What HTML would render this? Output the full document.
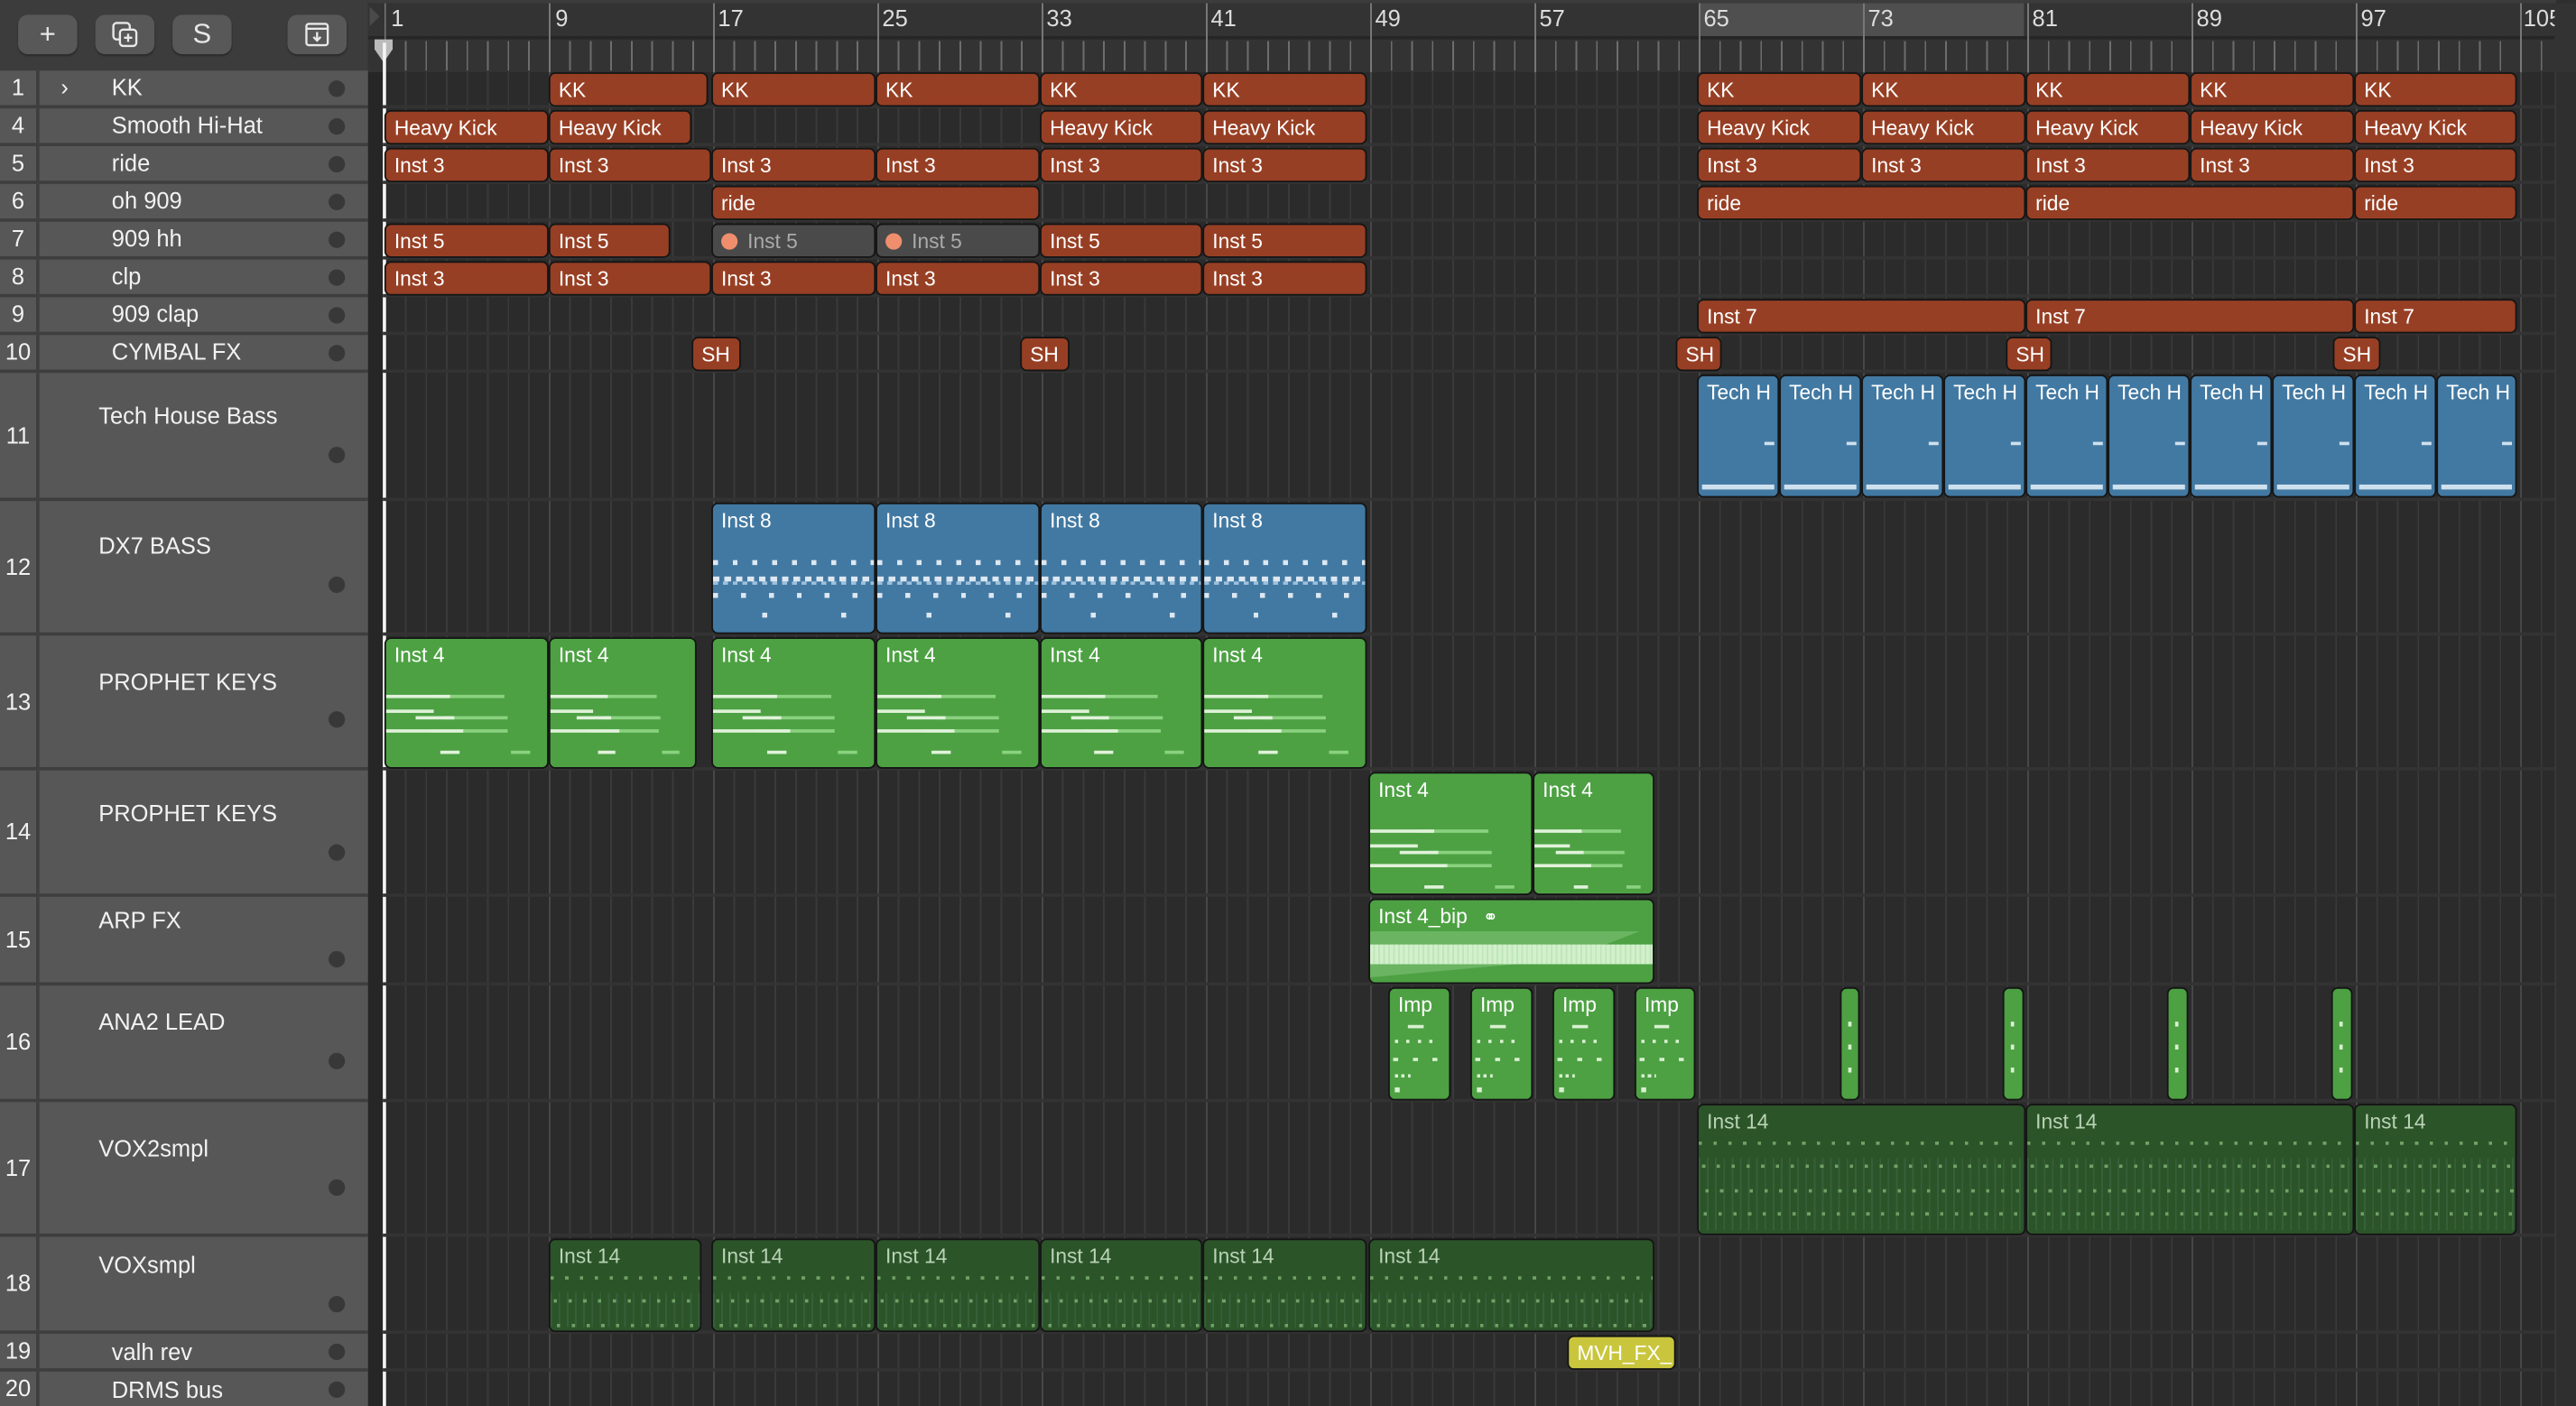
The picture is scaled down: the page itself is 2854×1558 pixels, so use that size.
<!DOCTYPE html>
<html><head><meta charset="utf-8">
<style>
html,body{margin:0;padding:0;background:#2b2b2b;width:2854px;height:1558px;overflow:hidden}
#c{position:absolute;left:0;top:0;width:1568px;height:856px;transform:scale(1.82015);transform-origin:0 0;font-family:"Liberation Sans",sans-serif;background:#2b2b2b;overflow:hidden}
.a{position:absolute}
.hdr{left:0;top:0;width:224px;height:44px;background:#3c3c3c;border-bottom:1px solid #2e2e2e}
.btn{position:absolute;top:9px;height:24px;width:36px;background:#585858;border-radius:6px;color:#e8e8e8;font-size:17px;text-align:center;line-height:24px;box-shadow:0 1px 1px #2a2a2a}
.tl{left:0;width:224px;background:#575757;border-bottom:2px solid #3e3e3e;box-sizing:border-box;color:#f2f2f2;font-size:14px}
.tl .n{position:absolute;left:0;width:22px;text-align:center;height:100%;border-right:2px solid #3e3e3e}
.tl .nm{position:absolute}
.tl .d{position:absolute;left:200px;width:10px;height:10px;border-radius:5px;background:#383838}
.lane{left:233px;width:1322px;border-bottom:2px solid #333;box-sizing:border-box}
.r{position:absolute;box-sizing:border-box;border:1.5px solid #151515;border-radius:4px;color:#fff;font-size:12.5px;padding:2px 0 0 5px;overflow:hidden;white-space:nowrap;line-height:17px}
.o{background:#973f24}
.g{background:#4a4a4a;color:#aaa}
.b{background:#4279a2}
.gr{background:#4da143}
.dg{background:#2c5429;color:#b9d3b5}
.y{background:#c9c63e;color:#fff}
.dot{display:inline-block;width:10px;height:10px;border-radius:5px;background:#ef8e6d;margin-right:6px;vertical-align:-1px}
.n4{position:absolute;left:0;right:0;top:34px;height:38px;background:
linear-gradient(#e0f2da,#e0f2da) 0 0/40% 2px no-repeat,
linear-gradient(#8ad27f,#8ad27f) 52% 0/44% 2px no-repeat,
linear-gradient(#e0f2da,#e0f2da) 0 9px/30% 2px no-repeat,
linear-gradient(#e0f2da,#e0f2da) 24% 13px/24% 2px no-repeat,
linear-gradient(#8ad27f,#8ad27f) 60% 13px/40% 2px no-repeat,
linear-gradient(#e0f2da,#e0f2da) 0 21px/48% 2px no-repeat,
linear-gradient(#8ad27f,#8ad27f) 52% 21px/48% 2px no-repeat,
linear-gradient(#e0f2da,#e0f2da) 38% 34px/12% 2px no-repeat,
linear-gradient(#8ad27f,#8ad27f) 88% 34px/12% 2px no-repeat}
.n8{position:absolute;left:0;right:0;top:34px;height:40px;background:
repeating-linear-gradient(90deg,#dde8f2 0 3px,transparent 3px 12px) 0 0/100% 3px no-repeat,
repeating-linear-gradient(90deg,#dde8f2 0 4px,transparent 4px 7px) 0 10px/100% 3px no-repeat,
repeating-linear-gradient(90deg,#9cc0dc 0 3px,transparent 3px 6px) 0 13px/100% 2px no-repeat,
repeating-linear-gradient(90deg,#dde8f2 0 3px,transparent 3px 17px) 0 20px/100% 3px no-repeat,
repeating-linear-gradient(90deg,transparent 0 30px,#dde8f2 30px 33px,transparent 33px 48px) 0 32px/100% 3px no-repeat}
.n14{position:absolute;left:0;right:0;top:22px;bottom:2px;background:
repeating-linear-gradient(90deg,#6fa266 0 2px,transparent 2px 9px) 0 0/100% 2px no-repeat,
repeating-linear-gradient(90deg,#6fa266 0 2px,transparent 2px 9px) 2px 14px/100% 2px no-repeat,
repeating-linear-gradient(90deg,#6fa266 0 2px,transparent 2px 9px) 4px 29px/100% 2px no-repeat,
repeating-linear-gradient(90deg,#6fa266 0 2px,transparent 2px 9px) 3px 43px/100% 2px no-repeat,
repeating-linear-gradient(90deg,#36603a 0 1px,transparent 1px 5px) 0 10px/100% 100% no-repeat}
.th{position:absolute;left:0;right:0;bottom:4px;height:3px;background:#cfe0ee;margin:0 2px}
.th2{position:absolute;right:2px;top:40px;width:6px;height:2px;background:#cfe0ee}
.imp{position:absolute;left:2px;right:2px;top:22px;bottom:2px;background:
linear-gradient(#d8f0d0,#d8f0d0) 40% 0/30% 2px no-repeat,
repeating-linear-gradient(90deg,#d8f0d0 0 2px,transparent 2px 7px) 20% 9px/80% 2px no-repeat,
repeating-linear-gradient(90deg,#d8f0d0 0 3px,transparent 3px 12px) 10% 20px/100% 2px no-repeat,
repeating-linear-gradient(90deg,#d8f0d0 0 2px,transparent 2px 4px) 5% 30px/30% 2px no-repeat,
linear-gradient(#d8f0d0,#d8f0d0) 5% 38px/3px 3px no-repeat}
.thin{position:absolute;left:4px;width:2px;top:20px;bottom:6px;background:repeating-linear-gradient(#d8f0d0 0 3px,transparent 3px 14px)}
</style></head><body><div id="c">

<div class="a" style="left:224px;top:0;width:10px;height:856px;background:#262626"></div>
<div class="a" style="left:234px;top:44px;width:1321px;height:812px;background:repeating-linear-gradient(90deg,#3a3a3a 0 1px,transparent 1px 12.5px)"></div>
<div class="a" style="left:234px;top:44px;width:1321px;height:812px;background:repeating-linear-gradient(90deg,#474747 0 1px,transparent 1px 100px)"></div>

<div class="a" style="left:224px;top:0;width:1344px;height:2px;background:#3c3c3c"></div>
<div class="a" style="left:224px;top:2px;width:1331px;height:20px;background:#333"></div>
<div class="a" style="left:1034px;top:2px;width:198px;height:20px;background:#4f4f4f"></div>
<div class="a" style="left:224px;top:22px;width:1331px;height:2px;background:#262626"></div>
<div class="a" style="left:224px;top:24px;width:1331px;height:20px;background:#333"></div>
<div class="a" style="left:234px;top:25px;width:1321px;height:18px;background:repeating-linear-gradient(90deg,#6d6d6d 0 1px,transparent 1px 12.5px)"></div>
<div class="a" style="left:234px;top:2px;width:1321px;height:42px;background:repeating-linear-gradient(90deg,#777 0 1px,transparent 1px 100px)"></div>
<div class="a" style="left:1555px;top:0;width:13px;height:856px;background:#2f2f2f;border-left:1px solid #3a3a3a"></div>
<div class="a" style="top:3px;color:#ddd;font-size:14px;left:238px">1</div>
<div class="a" style="top:3px;color:#ddd;font-size:14px;left:338px">9</div>
<div class="a" style="top:3px;color:#ddd;font-size:14px;left:437px">17</div>
<div class="a" style="top:3px;color:#ddd;font-size:14px;left:537px">25</div>
<div class="a" style="top:3px;color:#ddd;font-size:14px;left:637px">33</div>
<div class="a" style="top:3px;color:#ddd;font-size:14px;left:737px">41</div>
<div class="a" style="top:3px;color:#ddd;font-size:14px;left:837px">49</div>
<div class="a" style="top:3px;color:#ddd;font-size:14px;left:937px">57</div>
<div class="a" style="top:3px;color:#ddd;font-size:14px;left:1037px">65</div>
<div class="a" style="top:3px;color:#ddd;font-size:14px;left:1137px">73</div>
<div class="a" style="top:3px;color:#ddd;font-size:14px;left:1237px">81</div>
<div class="a" style="top:3px;color:#ddd;font-size:14px;left:1337px">89</div>
<div class="a" style="top:3px;color:#ddd;font-size:14px;left:1437px">97</div>
<div class="a" style="top:3px;color:#ddd;font-size:14px;left:1536px">105</div>
<div class="a" style="left:1555px;top:2px;width:13px;height:42px;background:#333"></div>
<svg class="a" style="left:224px;top:0" width="20" height="44"><path d="M1 4 L7 10 L1 16Z" fill="#4a4a4a"/><path d="M4 24 h11 v6 l-5.5 8 l-5.5-8z" fill="#bbb"/></svg>
<div class="a" style="left:233px;top:26px;width:1.5px;height:830px;background:#f4f4f4"></div>

<div class="a hdr">
<div class="btn" style="left:11px">+</div>
<div class="btn" style="left:58px"><svg width="18" height="18" style="margin-top:3px" viewBox="0 0 18 18" fill="none" stroke="#e8e8e8" stroke-width="1.3"><rect x="2" y="2" width="10" height="10" rx="2"/><rect x="6" y="6" width="10" height="10" rx="2" fill="#585858"/><path d="M11 8.5v5M8.5 11h5"/></svg></div>
<div class="btn" style="left:105px">S</div>
<div class="btn" style="left:175px"><svg width="16" height="16" style="margin-top:4px" viewBox="0 0 16 16" fill="none" stroke="#e8e8e8" stroke-width="1.3"><rect x="1.5" y="1.5" width="13" height="13" rx="1.5"/><path d="M1.5 4.5h13M8 6.5v5M5.8 9.5L8 11.7l2.2-2.2"/></svg></div>
</div>

<div class="a tl" style="top:43px;height:23px"><div class="n" style="line-height:21px">1</div><div class="nm" style="left:37px;top:2px">›</div><div class="nm" style="left:68px;top:2px">KK</div><div class="d" style="top:6px"></div></div>
<div class="a tl" style="top:66px;height:23px"><div class="n" style="line-height:21px">4</div><div class="nm" style="left:68px;top:2px">Smooth Hi-Hat</div><div class="d" style="top:6px"></div></div>
<div class="a tl" style="top:89px;height:23px"><div class="n" style="line-height:21px">5</div><div class="nm" style="left:68px;top:2px">ride</div><div class="d" style="top:6px"></div></div>
<div class="a tl" style="top:112px;height:23px"><div class="n" style="line-height:21px">6</div><div class="nm" style="left:68px;top:2px">oh 909</div><div class="d" style="top:6px"></div></div>
<div class="a tl" style="top:135px;height:23px"><div class="n" style="line-height:21px">7</div><div class="nm" style="left:68px;top:2px">909 hh</div><div class="d" style="top:6px"></div></div>
<div class="a tl" style="top:158px;height:23px"><div class="n" style="line-height:21px">8</div><div class="nm" style="left:68px;top:2px">clp</div><div class="d" style="top:6px"></div></div>
<div class="a tl" style="top:181px;height:23px"><div class="n" style="line-height:21px">9</div><div class="nm" style="left:68px;top:2px">909 clap</div><div class="d" style="top:6px"></div></div>
<div class="a tl" style="top:204px;height:23px"><div class="n" style="line-height:21px">10</div><div class="nm" style="left:68px;top:2px">CYMBAL FX</div><div class="d" style="top:6px"></div></div>
<div class="a tl" style="top:227px;height:78px"><div class="n" style="line-height:76px">11</div><div class="nm" style="left:60px;top:18px">Tech House Bass</div><div class="d" style="top:45px"></div></div>
<div class="a tl" style="top:305px;height:82px"><div class="n" style="line-height:80px">12</div><div class="nm" style="left:60px;top:19px">DX7 BASS</div><div class="d" style="top:46px"></div></div>
<div class="a tl" style="top:387px;height:82px"><div class="n" style="line-height:80px">13</div><div class="nm" style="left:60px;top:20px">PROPHET KEYS</div><div class="d" style="top:46px"></div></div>
<div class="a tl" style="top:469px;height:77px"><div class="n" style="line-height:75px">14</div><div class="nm" style="left:60px;top:18px">PROPHET KEYS</div><div class="d" style="top:45px"></div></div>
<div class="a tl" style="top:546px;height:54px"><div class="n" style="line-height:52px">15</div><div class="nm" style="left:60px;top:6px">ARP FX</div><div class="d" style="top:33px"></div></div>
<div class="a tl" style="top:600px;height:71px"><div class="n" style="line-height:69px">16</div><div class="nm" style="left:60px;top:14px">ANA2 LEAD</div><div class="d" style="top:41px"></div></div>
<div class="a tl" style="top:671px;height:82px"><div class="n" style="line-height:80px">17</div><div class="nm" style="left:60px;top:20px">VOX2smpl</div><div class="d" style="top:47px"></div></div>
<div class="a tl" style="top:753px;height:59px"><div class="n" style="line-height:57px">18</div><div class="nm" style="left:60px;top:9px">VOXsmpl</div><div class="d" style="top:36px"></div></div>
<div class="a tl" style="top:812px;height:23px"><div class="n" style="line-height:21px">19</div><div class="nm" style="left:68px;top:3px">valh rev</div><div class="d" style="top:6px"></div></div>
<div class="a tl" style="top:835px;height:23px"><div class="n" style="line-height:21px">20</div><div class="nm" style="left:68px;top:3px">DRMS bus</div><div class="d" style="top:6px"></div></div>

<div class="a lane" style="top:43px;height:23px"></div><div class="a lane" style="top:66px;height:23px"></div><div class="a lane" style="top:89px;height:23px"></div><div class="a lane" style="top:112px;height:23px"></div><div class="a lane" style="top:135px;height:23px"></div><div class="a lane" style="top:158px;height:23px"></div><div class="a lane" style="top:181px;height:23px"></div><div class="a lane" style="top:204px;height:23px"></div><div class="a lane" style="top:227px;height:78px"></div><div class="a lane" style="top:305px;height:82px"></div><div class="a lane" style="top:387px;height:82px"></div><div class="a lane" style="top:469px;height:77px"></div><div class="a lane" style="top:546px;height:54px"></div><div class="a lane" style="top:600px;height:71px"></div><div class="a lane" style="top:671px;height:82px"></div><div class="a lane" style="top:753px;height:59px"></div><div class="a lane" style="top:812px;height:23px"></div>

<div class="r o" style="left:334px;top:44px;width:97px;height:21px">KK</div>
<div class="r o" style="left:433px;top:44px;width:100px;height:21px">KK</div>
<div class="r o" style="left:533px;top:44px;width:100px;height:21px">KK</div>
<div class="r o" style="left:633px;top:44px;width:99px;height:21px">KK</div>
<div class="r o" style="left:732px;top:44px;width:100px;height:21px">KK</div>
<div class="r o" style="left:1033px;top:44px;width:100px;height:21px">KK</div>
<div class="r o" style="left:1133px;top:44px;width:100px;height:21px">KK</div>
<div class="r o" style="left:1233px;top:44px;width:100px;height:21px">KK</div>
<div class="r o" style="left:1333px;top:44px;width:100px;height:21px">KK</div>
<div class="r o" style="left:1433px;top:44px;width:99px;height:21px">KK</div>
<div class="r o" style="left:234px;top:67px;width:100px;height:21px">Heavy Kick</div>
<div class="r o" style="left:334px;top:67px;width:87px;height:21px">Heavy Kick</div>
<div class="r o" style="left:633px;top:67px;width:99px;height:21px">Heavy Kick</div>
<div class="r o" style="left:732px;top:67px;width:100px;height:21px">Heavy Kick</div>
<div class="r o" style="left:1033px;top:67px;width:100px;height:21px">Heavy Kick</div>
<div class="r o" style="left:1133px;top:67px;width:100px;height:21px">Heavy Kick</div>
<div class="r o" style="left:1233px;top:67px;width:100px;height:21px">Heavy Kick</div>
<div class="r o" style="left:1333px;top:67px;width:100px;height:21px">Heavy Kick</div>
<div class="r o" style="left:1433px;top:67px;width:99px;height:21px">Heavy Kick</div>
<div class="r o" style="left:234px;top:90px;width:100px;height:21px">Inst 3</div>
<div class="r o" style="left:334px;top:90px;width:99px;height:21px">Inst 3</div>
<div class="r o" style="left:433px;top:90px;width:100px;height:21px">Inst 3</div>
<div class="r o" style="left:533px;top:90px;width:100px;height:21px">Inst 3</div>
<div class="r o" style="left:633px;top:90px;width:99px;height:21px">Inst 3</div>
<div class="r o" style="left:732px;top:90px;width:100px;height:21px">Inst 3</div>
<div class="r o" style="left:1033px;top:90px;width:100px;height:21px">Inst 3</div>
<div class="r o" style="left:1133px;top:90px;width:100px;height:21px">Inst 3</div>
<div class="r o" style="left:1233px;top:90px;width:100px;height:21px">Inst 3</div>
<div class="r o" style="left:1333px;top:90px;width:100px;height:21px">Inst 3</div>
<div class="r o" style="left:1433px;top:90px;width:99px;height:21px">Inst 3</div>
<div class="r o" style="left:433px;top:113px;width:200px;height:21px">ride</div>
<div class="r o" style="left:1033px;top:113px;width:200px;height:21px">ride</div>
<div class="r o" style="left:1233px;top:113px;width:200px;height:21px">ride</div>
<div class="r o" style="left:1433px;top:113px;width:99px;height:21px">ride</div>
<div class="r o" style="left:234px;top:136px;width:100px;height:21px">Inst 5</div>
<div class="r o" style="left:334px;top:136px;width:74px;height:21px">Inst 5</div>
<div class="r g" style="left:433px;top:136px;width:100px;height:21px"><span class="dot"></span>Inst 5</div>
<div class="r g" style="left:533px;top:136px;width:100px;height:21px"><span class="dot"></span>Inst 5</div>
<div class="r o" style="left:633px;top:136px;width:99px;height:21px">Inst 5</div>
<div class="r o" style="left:732px;top:136px;width:100px;height:21px">Inst 5</div>
<div class="r o" style="left:234px;top:159px;width:100px;height:21px">Inst 3</div>
<div class="r o" style="left:334px;top:159px;width:99px;height:21px">Inst 3</div>
<div class="r o" style="left:433px;top:159px;width:100px;height:21px">Inst 3</div>
<div class="r o" style="left:533px;top:159px;width:100px;height:21px">Inst 3</div>
<div class="r o" style="left:633px;top:159px;width:99px;height:21px">Inst 3</div>
<div class="r o" style="left:732px;top:159px;width:100px;height:21px">Inst 3</div>
<div class="r o" style="left:1033px;top:182px;width:200px;height:21px">Inst 7</div>
<div class="r o" style="left:1233px;top:182px;width:200px;height:21px">Inst 7</div>
<div class="r o" style="left:1433px;top:182px;width:99px;height:21px">Inst 7</div>
<div class="r o" style="left:421px;top:205px;width:30px;height:21px">SH</div>
<div class="r o" style="left:621px;top:205px;width:30px;height:21px">SH</div>
<div class="r o" style="left:1020px;top:205px;width:28px;height:21px">SH</div>
<div class="r o" style="left:1221px;top:205px;width:28px;height:21px">SH</div>
<div class="r o" style="left:1420px;top:205px;width:29px;height:21px">SH</div>
<div class="r b" style="left:1033px;top:228px;width:50px;height:75px">Tech H<div class="th2"></div><div class="th"></div></div>
<div class="r b" style="left:1083px;top:228px;width:50px;height:75px">Tech H<div class="th2"></div><div class="th"></div></div>
<div class="r b" style="left:1133px;top:228px;width:50px;height:75px">Tech H<div class="th2"></div><div class="th"></div></div>
<div class="r b" style="left:1183px;top:228px;width:50px;height:75px">Tech H<div class="th2"></div><div class="th"></div></div>
<div class="r b" style="left:1233px;top:228px;width:50px;height:75px">Tech H<div class="th2"></div><div class="th"></div></div>
<div class="r b" style="left:1283px;top:228px;width:50px;height:75px">Tech H<div class="th2"></div><div class="th"></div></div>
<div class="r b" style="left:1333px;top:228px;width:50px;height:75px">Tech H<div class="th2"></div><div class="th"></div></div>
<div class="r b" style="left:1383px;top:228px;width:50px;height:75px">Tech H<div class="th2"></div><div class="th"></div></div>
<div class="r b" style="left:1433px;top:228px;width:50px;height:75px">Tech H<div class="th2"></div><div class="th"></div></div>
<div class="r b" style="left:1483px;top:228px;width:49px;height:75px">Tech H<div class="th2"></div><div class="th"></div></div>
<div class="r b" style="left:433px;top:306px;width:100px;height:80px">Inst 8<div class="n8"></div></div>
<div class="r b" style="left:533px;top:306px;width:100px;height:80px">Inst 8<div class="n8"></div></div>
<div class="r b" style="left:633px;top:306px;width:99px;height:80px">Inst 8<div class="n8"></div></div>
<div class="r b" style="left:732px;top:306px;width:100px;height:80px">Inst 8<div class="n8"></div></div>
<div class="r gr" style="left:234px;top:388px;width:100px;height:80px">Inst 4<div class="n4"></div></div>
<div class="r gr" style="left:334px;top:388px;width:90px;height:80px">Inst 4<div class="n4"></div></div>
<div class="r gr" style="left:433px;top:388px;width:100px;height:80px">Inst 4<div class="n4"></div></div>
<div class="r gr" style="left:533px;top:388px;width:100px;height:80px">Inst 4<div class="n4"></div></div>
<div class="r gr" style="left:633px;top:388px;width:99px;height:80px">Inst 4<div class="n4"></div></div>
<div class="r gr" style="left:732px;top:388px;width:100px;height:80px">Inst 4<div class="n4"></div></div>
<div class="r gr" style="left:833px;top:470px;width:100px;height:75px">Inst 4<div class="n4"></div></div>
<div class="r gr" style="left:933px;top:470px;width:74px;height:75px">Inst 4<div class="n4"></div></div>
<div class="r gr" style="left:833px;top:547px;width:174px;height:52px">Inst 4_bip <span style="font-size:11px;margin-left:6px">&#x26AD;</span>
<div style="position:absolute;left:0;right:3px;top:19px;height:28px;background:linear-gradient(#6ab462,#6ab462);clip-path:polygon(0 0,97% 0,80% 40%,55% 70%,0 100%)"></div>
<div style="position:absolute;left:0;right:0;top:27px;height:12px;background:repeating-linear-gradient(90deg,#d2f0cc 0 2px,#bfe6b8 2px 3px)"></div>
</div>
<div class="r gr" style="left:845px;top:601px;width:38px;height:69px">Imp<div class="imp"></div></div>
<div class="r gr" style="left:895px;top:601px;width:38px;height:69px">Imp<div class="imp"></div></div>
<div class="r gr" style="left:945px;top:601px;width:38px;height:69px">Imp<div class="imp"></div></div>
<div class="r gr" style="left:995px;top:601px;width:37px;height:69px">Imp<div class="imp"></div></div>
<div class="r gr" style="left:1120px;top:601px;width:12px;height:69px;padding:0"><div class="thin"></div></div>
<div class="r gr" style="left:1219px;top:601px;width:13px;height:69px;padding:0"><div class="thin"></div></div>
<div class="r gr" style="left:1319px;top:601px;width:13px;height:69px;padding:0"><div class="thin"></div></div>
<div class="r gr" style="left:1419px;top:601px;width:13px;height:69px;padding:0"><div class="thin"></div></div>
<div class="r dg" style="left:1033px;top:672px;width:200px;height:80px">Inst 14<div class="n14"></div></div>
<div class="r dg" style="left:1233px;top:672px;width:200px;height:80px">Inst 14<div class="n14"></div></div>
<div class="r dg" style="left:1433px;top:672px;width:99px;height:80px">Inst 14<div class="n14"></div></div>
<div class="r dg" style="left:334px;top:754px;width:93px;height:57px">Inst 14<div class="n14"></div></div>
<div class="r dg" style="left:433px;top:754px;width:100px;height:57px">Inst 14<div class="n14"></div></div>
<div class="r dg" style="left:533px;top:754px;width:100px;height:57px">Inst 14<div class="n14"></div></div>
<div class="r dg" style="left:633px;top:754px;width:99px;height:57px">Inst 14<div class="n14"></div></div>
<div class="r dg" style="left:732px;top:754px;width:100px;height:57px">Inst 14<div class="n14"></div></div>
<div class="r dg" style="left:833px;top:754px;width:174px;height:57px">Inst 14<div class="n14"></div></div>
<div class="r y" style="left:954px;top:813px;width:66px;height:21px">MVH_FX_</div>

</div></body></html>
